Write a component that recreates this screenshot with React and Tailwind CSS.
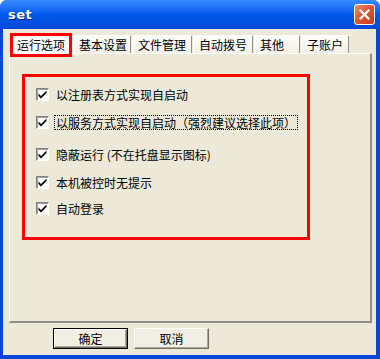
import React from 'react'

const TABS = ['基本设置', '文件管理', '自动拨号', '其他', '子账户']
const TAB_W = [58, 60, 60, 46, 48]

const OPTIONS = [
  { label: '以注册表方式实现自启动', top: 'mt-[10px]' },
  { label: '以服务方式实现自启动（强烈建议选择此项）', top: 'mt-[13px]', focus: true },
  { label: '隐蔽运行 (不在托盘显示图标)', top: 'mt-[17px]' },
  { label: '本机被控时无提示', top: 'mt-[13px]' },
  { label: '自动登录', top: 'mt-[11px]' },
]

function CheckBox() {
  return (
    <div className="w-[13px] h-[13px] shrink-0 border border-t-[#808080] border-l-[#808080] border-r-white border-b-white bg-white flex items-center justify-center shadow-[inset_1px_1px_0_#a0a0a0]">
      <svg width="9" height="9" viewBox="0 0 9 9">
        <path d="M0.5 3.5 L3 6 L8.5 0.5 L8.5 3 L3 8.5 L0.5 6 Z" fill="#000" />
      </svg>
    </div>
  )
}

function Btn({ children, primary }) {
  return (
    <div
      className={`w-[75px] h-[21px] flex items-center justify-center text-[12px] text-black ${
        primary ? 'border border-black' : ''
      }`}
    >
      <div className="w-full h-full flex items-center justify-center bg-[#f1efe4] border border-t-white border-l-white border-r-[#716f64] border-b-[#716f64] shadow-[inset_-1px_-1px_0_#aca899]">
        {children}
      </div>
    </div>
  )
}

export default function App() {
  return (
    <div
      className="w-[380px] h-[359px] bg-[#0846d8] rounded-t-[7px] flex flex-col overflow-hidden"
      style={{ fontFamily: '"Noto Sans CJK SC", "Liberation Sans", sans-serif' }}
    >
      {/* title bar */}
      <div className="h-[29px] shrink-0 bg-gradient-to-b from-[#3a8cff] via-[#0058ee] to-[#0249d7] flex items-center justify-between pl-[8px] pr-[5px]">
        <span
          className="text-white font-bold text-[13px] tracking-[0.5px] [text-shadow:1px_1px_0_#0a1e6e]"
          style={{ fontFamily: '"DejaVu Sans", sans-serif' }}
        >
          set
        </span>
        <div className="w-[21px] h-[21px] rounded-[3px] border border-white bg-gradient-to-br from-[#e98a6c] via-[#dd5232] to-[#c2401f] flex items-center justify-center">
          <svg width="11" height="11" viewBox="0 0 11 11">
            <path d="M1.5 1.5 L9.5 9.5 M9.5 1.5 L1.5 9.5" stroke="#fff" strokeWidth="2.2" strokeLinecap="square" />
          </svg>
        </div>
      </div>

      {/* client */}
      <div className="flex-1 mx-[3px] mb-[4px] mr-[4px] bg-[#ece9d8] flex flex-col">
        {/* tab strip */}
        <div className="flex items-end h-[20px] pl-[7px] mt-[4px]">
          <div className="w-[62px] h-[24px] border-[3px] border-[#ff0000] bg-[#fcfcfe] flex items-center justify-center text-[12px] text-black relative z-10 -mb-[4px]">
            运行选项
          </div>
          {TABS.map((t, i) => (
            <div
              key={t}
              className="h-[18px] ml-[1px] border-t border-l border-white border-r border-r-[#8e8d86] rounded-t-[2px] bg-gradient-to-b from-[#fdfdfb] to-[#f1efe6] flex items-center pl-[5px] text-[12px] text-black"
              style={{ width: TAB_W[i] }}
            >
              {t}
            </div>
          ))}
        </div>

        {/* panel */}
        <div className="ml-[6px] w-[363px] h-[270px] border-t border-l border-white border-r-2 border-b-2 border-r-[#8e8f8a] border-b-[#8e8f8a] flex flex-col">
          <div className="ml-[12px] mt-[20px] w-[288px] h-[166px] border-[3px] border-[#ff0000] flex flex-col pl-[11px]">
            {OPTIONS.map((o) => (
              <div key={o.label} className={`flex items-center h-[15px] ${o.top}`}>
                <CheckBox />
                <span
                  className={`ml-[5px] text-[12px] leading-[13px] text-black whitespace-nowrap ${
                    o.focus ? 'border border-dotted border-black px-[1px]' : 'px-[2px]'
                  }`}
                >
                  {o.label}
                </span>
              </div>
            ))}
          </div>
        </div>

        {/* buttons */}
        <div className="flex gap-[6px] ml-[50px] mt-[5px]">
          <Btn primary>确定</Btn>
          <Btn>取消</Btn>
        </div>
      </div>
    </div>
  )
}
